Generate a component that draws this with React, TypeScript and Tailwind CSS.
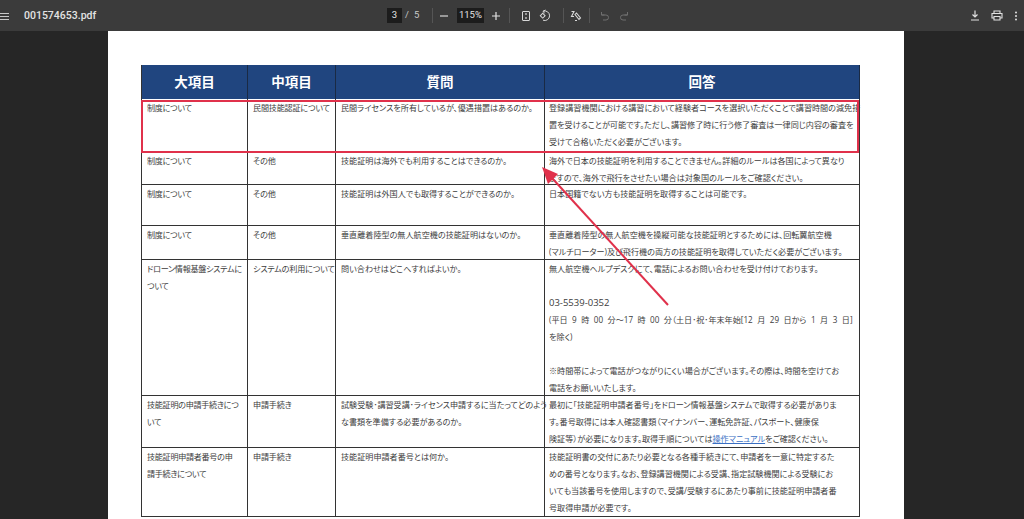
import type { ReactNode } from 'react';

type Row = { h: string; a: string[]; b: string; c: string[]; d: ReactNode[] };

const rows: Row[] = [
  {
    h: 'h-[53px]',
    a: ['制度について'],
    b: '民間技能認証について',
    c: ['民間ライセンスを所有しているが、優遇措置はあるのか。'],
    d: [
      '登録講習機関における講習において経験者コースを選択いただくことで講習時間の減免措',
      '置を受けることが可能です。ただし、講習修了時に行う修了審査は一律同じ内容の審査を',
      '受けて合格いただく必要がございます。',
    ],
  },
  {
    h: 'h-[33px]',
    a: ['制度について'],
    b: 'その他',
    c: ['技能証明は海外でも利用することはできるのか。'],
    d: [
      '海外で日本の技能証明を利用することできません。詳細のルールは各国によって異なり',
      'ますので、海外で飛行をさせたい場合は対象国のルールをご確認ください。',
    ],
  },
  {
    h: 'h-[41px]',
    a: ['制度について'],
    b: 'その他',
    c: ['技能証明は外国人でも取得することができるのか。'],
    d: ['日本国籍でない方も技能証明を取得することは可能です。'],
  },
  {
    h: 'h-[34px]',
    a: ['制度について'],
    b: 'その他',
    c: ['垂直離着陸型の無人航空機の技能証明はないのか。'],
    d: [
      '垂直離着陸型の無人航空機を操縦可能な技能証明とするためには、回転翼航空機',
      '(マルチローター)及び飛行機の両方の技能証明を取得していただく必要がございます。',
    ],
  },
  {
    h: 'h-[136px]',
    a: ['ドローン情報基盤システムに', 'ついて'],
    b: 'システムの利用について',
    c: ['問い合わせはどこへすればよいか。'],
    d: [
      '無人航空機ヘルプデスクにて、電話によるお問い合わせを受け付けております。',
      '\u00a0',
      <span className="text-[9.5px]">03-5539-0352</span>,
      <span className="[word-spacing:2.4px]">(平日 9 時 00 分～17 時 00 分（土日･祝･年末年始[12 月 29 日から 1 月 3 日]</span>,
      'を除く)',
      '\u00a0',
      '※時間帯によって電話がつながりにくい場合がございます。その際は、時間を空けてお',
      '電話をお願いいたします。',
    ],
  },
  {
    h: 'h-[52px]',
    a: ['技能証明の申請手続きにつ', 'いて'],
    b: '申請手続き',
    c: ['試験受験･講習受講･ライセンス申請するに当たってどのよう', 'な書類を準備する必要があるのか。'],
    d: [
      '最初に「技能証明申請者番号」をドローン情報基盤システムで取得する必要がありま',
      'す。番号取得には本人確認書類（マイナンバー、運転免許証、パスポート、健康保',
      <>
        険証等）が必要になります。取得手順については
        <span className="text-[#3a70c4] underline">操作マニュアル</span>
        をご確認ください。
      </>,
    ],
  },
  {
    h: 'h-[69px]',
    a: ['技能証明申請者番号の申', '請手続きについて'],
    b: '申請手続き',
    c: ['技能証明申請者番号とは何か。'],
    d: [
      '技能証明書の交付にあたり必要となる各種手続きにて、申請者を一意に特定するた',
      'めの番号となります。なお、登録講習機関による受講、指定試験機関による受験にお',
      'いても当該番号を使用しますので、受講/受験するにあたり事前に技能証明申請者番',
      '号取得申請が必要です。',
    ],
  },
];

function Lines({ items }: { items: ReactNode[] }) {
  return (
    <>
      {items.map((t, i) => (
        <div key={i} className="whitespace-nowrap">
          {t}
        </div>
      ))}
    </>
  );
}

function Divider() {
  return <div className="h-[15px] w-px bg-[#555]" />;
}

function TopBar() {
  return (
    <div className="flex h-[31px] shrink-0 items-center bg-[#3b3b3b] text-[#e3e3e3] font-['Roboto',sans-serif]">
      <svg width="10" height="10" viewBox="0 0 10 10" className="shrink-0" stroke="#c8c8c8" strokeWidth="1">
        <path d="M0 2.5h9M0 5.5h9M0 8.5h9" />
      </svg>
      <span className="ml-[14px] w-[363px] text-[10.5px] font-medium">001574653.pdf</span>
      <span className="flex h-[15px] w-[15px] items-center justify-center bg-[#1c1c1c] text-[9.5px]">3</span>
      <span className="ml-[3px] text-[9.5px] text-[#c8c8c8]">/</span>
      <span className="ml-[5px] w-[18px] text-[9.5px] text-[#c8c8c8]">5</span>
      <Divider />
      <svg width="10" height="10" viewBox="0 0 10 10" className="ml-[6px]" stroke="#d8d8d8" strokeWidth="1.2">
        <path d="M1 5h8" />
      </svg>
      <span className="ml-[8px] flex h-[15px] w-[27px] items-center justify-center bg-[#1c1c1c] text-[9.5px]">115%</span>
      <svg width="10" height="10" viewBox="0 0 10 10" className="ml-[7px]" stroke="#e3e3e3" strokeWidth="1.2">
        <path d="M1 5h8M5 1v8" />
      </svg>
      <div className="ml-[8px]">
        <Divider />
      </div>
      <svg width="12" height="12" viewBox="0 0 12 12" className="ml-[10px]" fill="none" stroke="#d8d8d8" strokeWidth="1">
        <rect x="2.5" y="1.5" width="7" height="9" rx="0.5" />
        <path d="M6 3v2M6 7v2" strokeWidth="1.2" />
      </svg>
      <svg width="13" height="13" viewBox="0 0 13 13" className="ml-[7px]" fill="none" stroke="#d8d8d8" strokeWidth="1">
        <path d="M4.2 2.2A4.8 4.8 0 1 1 4 11.2" />
        <path d="M6.5 1L4 2.3l1.6 2" />
        <rect x="2" y="5" width="3.4" height="3.4" transform="rotate(45 3.7 6.7)" />
      </svg>
      <div className="ml-[11px]">
        <Divider />
      </div>
      <svg width="12" height="12" viewBox="0 0 12 12" className="ml-[6px]" fill="none" stroke="#d8d8d8" strokeWidth="1.1">
        <path d="M1.5 1.5h2.5l-2.5 5h2.5M6.5 3l4 5-1.5 1.5-4-5zM5 10.5h2" />
      </svg>
      <div className="ml-[7px]">
        <Divider />
      </div>
      <svg width="10" height="10" viewBox="0 0 10 10" className="ml-[10px]" fill="none" stroke="#6e6e6e" strokeWidth="1">
        <path d="M1.5 1v3h3M1.5 4H6a2.5 2.5 0 0 1 0 5H3" />
      </svg>
      <svg width="10" height="10" viewBox="0 0 10 10" className="ml-[9px]" fill="none" stroke="#6e6e6e" strokeWidth="1">
        <path d="M8.5 1v3h-3M8.5 4H4a2.5 2.5 0 0 0 0 5h3" />
      </svg>
      <div className="flex-1" />
      <svg width="10" height="11" viewBox="0 0 10 11" fill="none" stroke="#e0e0e0" strokeWidth="1.2">
        <path d="M5 0.5v6M2.5 4.5L5 7l2.5-2.5M1 10h8" />
      </svg>
      <svg width="12" height="11" viewBox="0 0 12 11" className="ml-[11px]" fill="none" stroke="#e0e0e0" strokeWidth="1.1">
        <path d="M3 3V1h6v2M3 8H1V3.5h10V8H9M3 6.5h6V10H3z" />
      </svg>
      <svg width="4" height="10" viewBox="0 0 4 10" className="ml-[11px] mr-[6px]" fill="#e0e0e0">
        <circle cx="2" cy="1.5" r="1" />
        <circle cx="2" cy="5" r="1" />
        <circle cx="2" cy="8.5" r="1" />
      </svg>
    </div>
  );
}

export default function App() {
  return (
    <div className="flex h-[519px] w-[1024px] flex-col overflow-hidden bg-[#262626] font-['Open_Sans','Noto_Sans_CJK_JP',sans-serif]">
      <TopBar />
      <div className="relative flex-1 overflow-hidden">
        {/* pdf page */}
        <div className="ml-[108px] h-full w-[796px] bg-white pl-[33px] pt-[34px]">
          <div className="w-[719px] border-l border-[#333] text-[8.1px] leading-[17px] text-[#3c3c3c] [font-feature-settings:'palt']">
            <div className="grid h-[34px] grid-cols-[106px_88px_209px_315px] bg-[#20457f] text-[13.5px] font-bold text-white">
              {['大項目', '中項目', '質問', '回答'].map((t) => (
                <div key={t} className="flex items-center justify-center border-r border-[#1a2a44]">
                  {t}
                </div>
              ))}
            </div>
            {rows.map((r, i) => (
              <div
                key={i}
                className={`grid grid-cols-[106px_88px_209px_315px] border-b border-[#333] ${r.h}`}
              >
                <div className="border-r border-[#333] pl-[5px] tracking-[-0.3px]">
                  <Lines items={r.a} />
                </div>
                <div className="whitespace-nowrap border-r border-[#333] pl-[5px] tracking-[-0.2px]">{r.b}</div>
                <div className="border-r border-[#333] pl-[5px]">
                  <Lines items={r.c} />
                </div>
                <div className="border-r border-[#333] pl-[4px]">
                  <Lines items={r.d} />
                </div>
              </div>
            ))}
          </div>
        </div>

        {/* red highlight box from the annotation */}
        <div className="absolute left-[141px] top-[69px] h-[53px] w-[718px] border-2 border-[#e0314b]" />

        {/* red arrow */}
        <svg className="absolute left-[530px] top-[125px]" width="150" height="160" viewBox="530 156 150 160">
          <path d="M552 178L668 305" stroke="#e0314b" strokeWidth="2" />
          <path d="M542 167L558 174L548 184Z" fill="#e0314b" />
        </svg>
      </div>
    </div>
  );
}
